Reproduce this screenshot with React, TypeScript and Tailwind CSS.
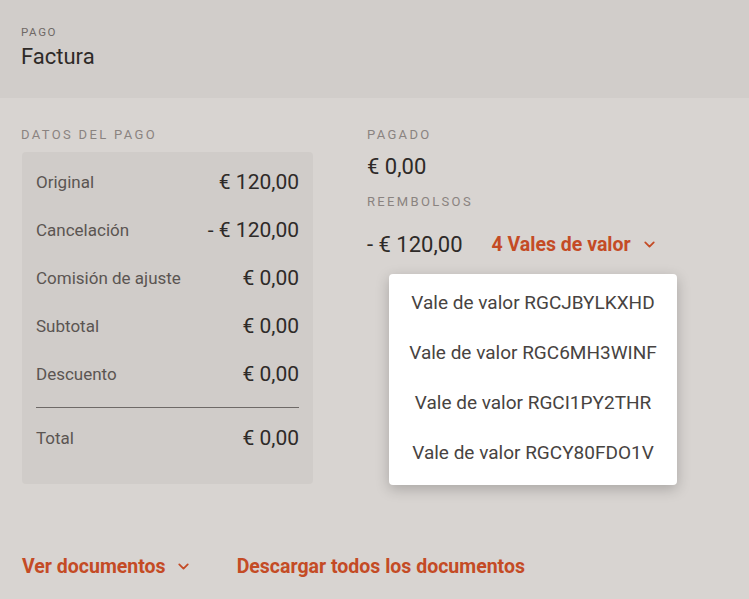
import { ChevronDown } from "lucide-react";

const ROWS = [
  { label: "Original", value: "€ 120,00" },
  { label: "Cancelación", value: "- € 120,00" },
  { label: "Comisión de ajuste", value: "€ 0,00" },
  { label: "Subtotal", value: "€ 0,00" },
  { label: "Descuento", value: "€ 0,00" },
];

const VOUCHERS = ["RGCJBYLKXHD", "RGC6MH3WINF", "RGCI1PY2THR", "RGCY80FDO1V"];

function Caption({ children }: { children: React.ReactNode }) {
  return (
    <div className="text-[13px] leading-[14px] tracking-[0.18em] text-[#8a8380] uppercase">
      {children}
    </div>
  );
}

export default function App() {
  return (
    <div
      className="w-[749px] h-[599px] bg-[#d8d4d1] text-[#333] overflow-hidden"
      style={{ fontFamily: "Roboto, 'Noto Sans', sans-serif" }}
    >
      {/* Header */}
      <header className="h-[98px] bg-[#d1cdca] px-[21px] pt-[26px]">
        <div className="text-[11.5px] leading-[12px] tracking-[0.14em] text-[#6f6966]">PAGO</div>
        <h1 className="mt-[5px] text-[22px] leading-[28px] text-[#2e2a28]">Factura</h1>
      </header>

      <div className="flex pt-[30px]">
        {/* Datos del pago */}
        <section className="w-[345px] pl-[21px]">
          <Caption>Datos del pago</Caption>
          <div className="mt-[10px] ml-px w-[291px] h-[332px] bg-[#d0ccc9] rounded-[4px] px-[14px] pt-[7px]">
            {ROWS.map((r) => (
              <div key={r.label} className="h-[48px] flex items-center justify-between">
                <span className="text-[17px] text-[#5b5552]">{r.label}</span>
                <span className="text-[21px] text-[#2e2a28]">{r.value}</span>
              </div>
            ))}
            <div className="mt-[8px] border-t border-[#6e6967]" />
            <div className="h-[62px] flex items-center justify-between">
              <span className="text-[17px] text-[#5b5552]">Total</span>
              <span className="text-[21px] text-[#2e2a28]">€ 0,00</span>
            </div>
          </div>
        </section>

        {/* Pagado / Reembolsos */}
        <section className="pl-[22px] relative">
          <Caption>Pagado</Caption>
          <div className="mt-[12px] text-[22px] leading-[26px] text-[#2e2a28]">€ 0,00</div>
          <div className="mt-[15px]">
            <Caption>Reembolsos</Caption>
          </div>
          <div className="mt-[21px] flex items-center">
            <span className="text-[22px] leading-[26px] text-[#2e2a28]">- € 120,00</span>
            <button className="ml-[29px] flex items-center gap-[10px] text-[19.5px] font-bold text-[#c44b25]">
              4 Vales de valor
              <ChevronDown size={17} strokeWidth={2.5} />
            </button>
          </div>

          {/* Dropdown menu */}
          <div className="absolute left-[44px] top-[146px] w-[288px] h-[211px] bg-white rounded-[4px] shadow-[0_4px_14px_rgba(0,0,0,0.22)] py-[4px]">
            {VOUCHERS.map((v) => (
              <div
                key={v}
                className="h-[50px] flex items-center justify-center text-[19px] text-[#474341]"
              >
                Vale de valor {v}
              </div>
            ))}
          </div>
        </section>
      </div>

      {/* Footer links */}
      <div className="mt-[68px] pl-[22px] flex items-center text-[19.5px] font-bold text-[#c44b25]">
        <button className="flex items-center gap-[9px]">
          Ver documentos
          <ChevronDown size={17} strokeWidth={2.5} />
        </button>
        <button className="ml-[45px]">Descargar todos los documentos</button>
      </div>
    </div>
  );
}
